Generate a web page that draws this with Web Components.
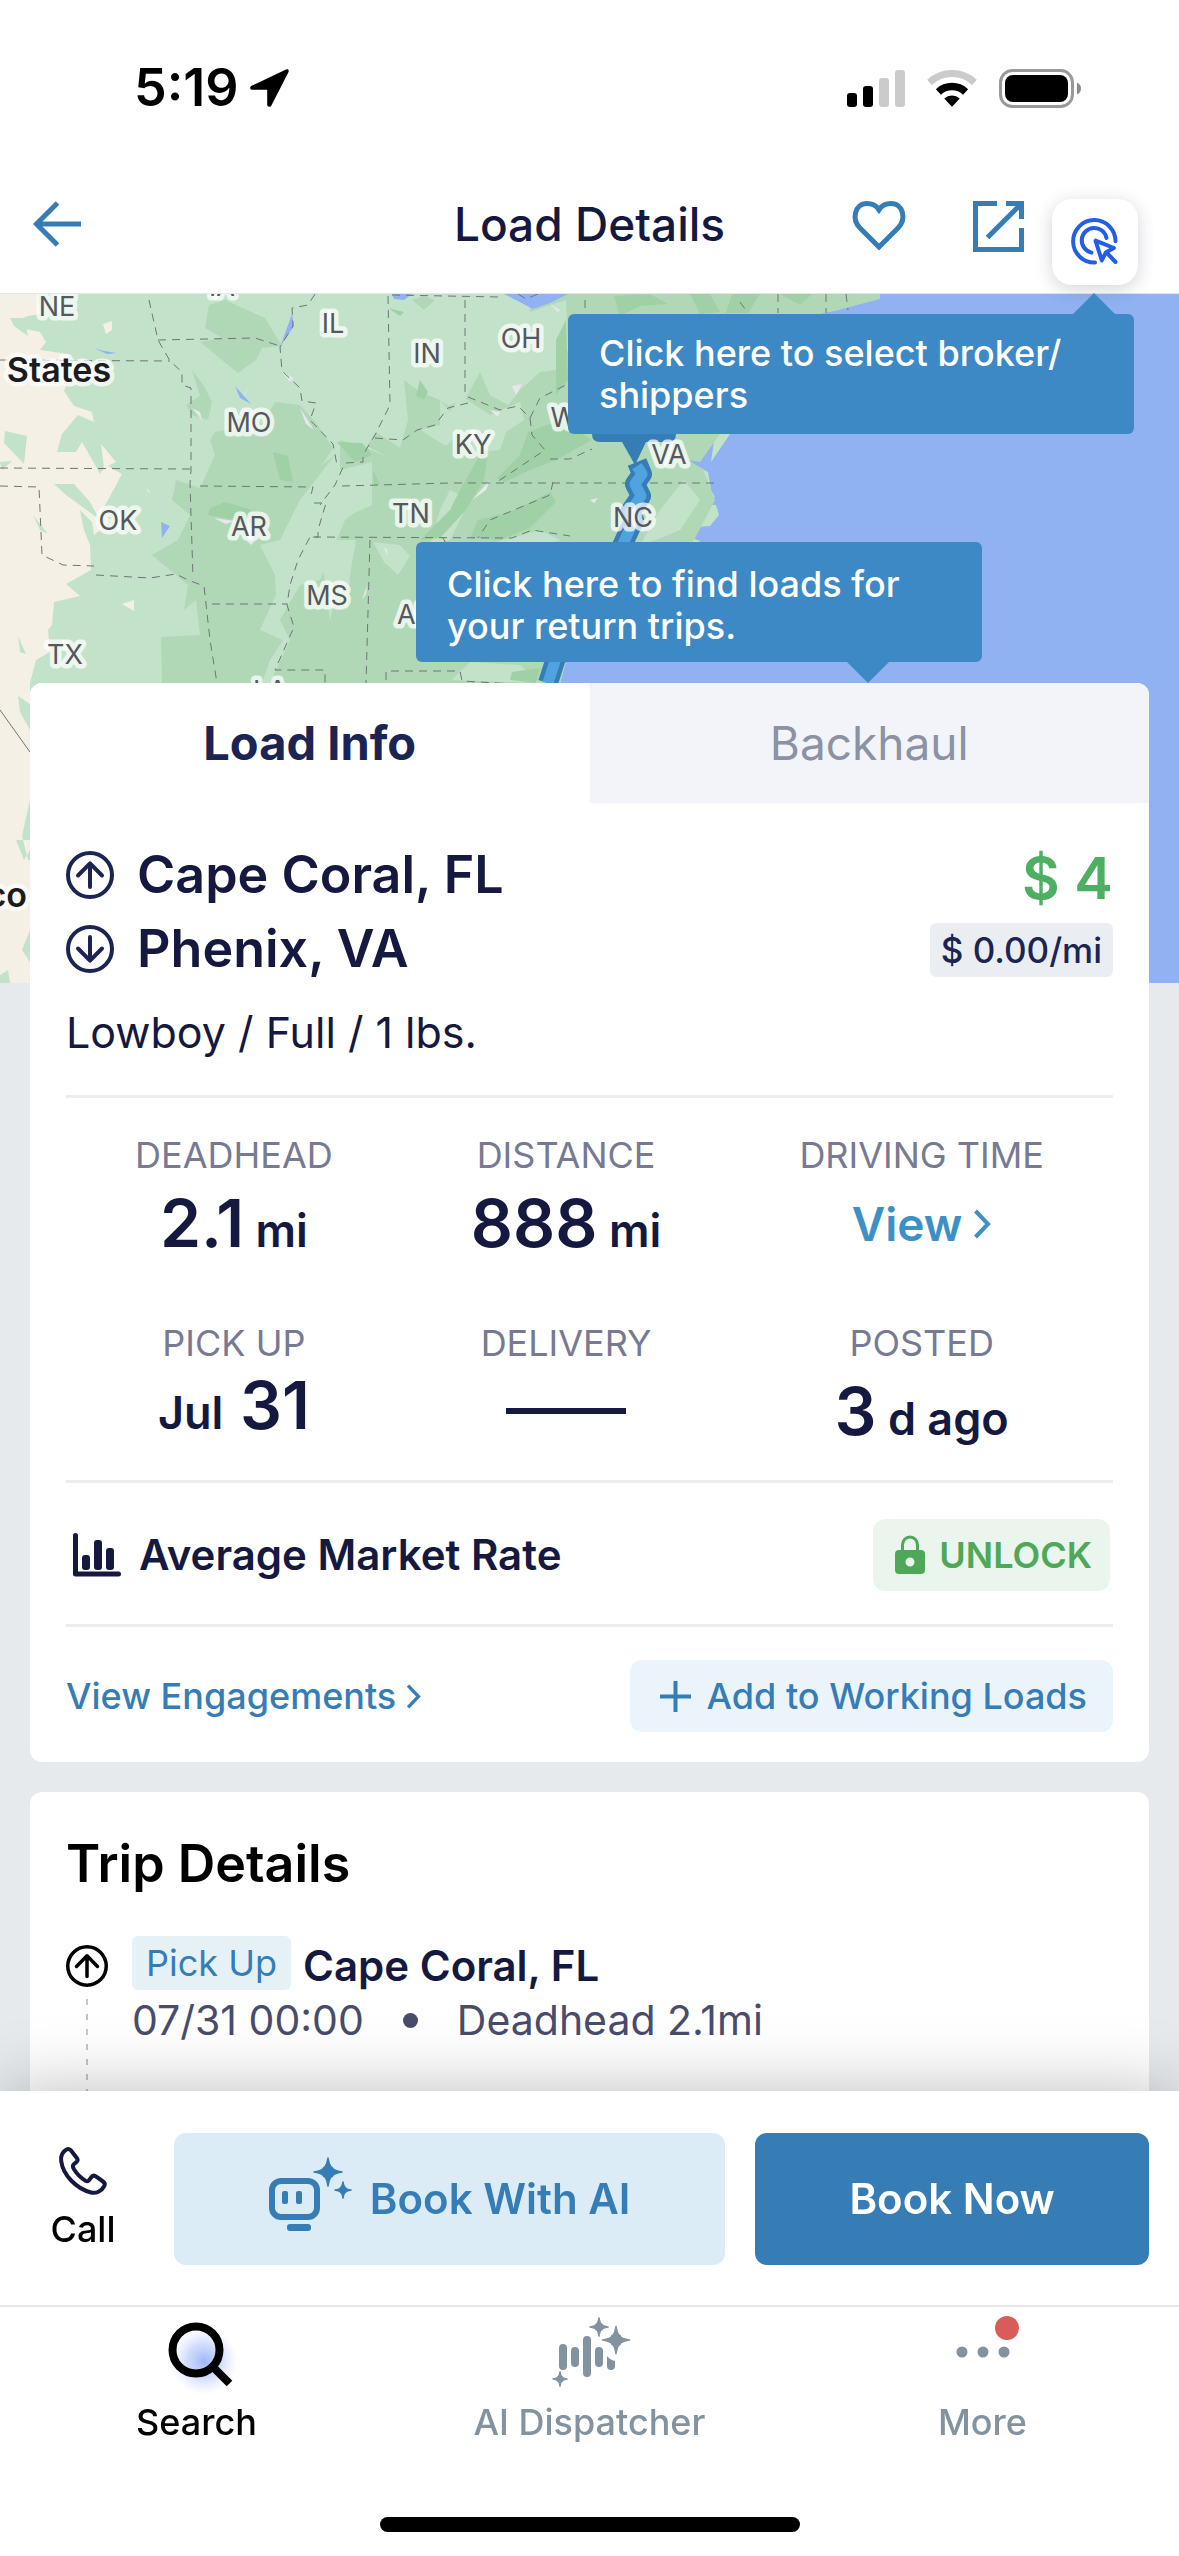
<!DOCTYPE html>
<html lang="en">
<head>
<meta charset="utf-8">
<meta name="viewport" content="width=device-width, initial-scale=1">
<title>Load Details</title>
<style>
  :root {
    --navy: #15193f;
    --indigo: #1b2452;
    --blue: #367db6;
    --tip: #3c89c5;
    --muted: #777a92;
    --slate: #83929f;
    --line: #ebedf2;
    --page: #e6eaed;
    --pad: 36px;
    --gutter: 30px;
  }
  html, body { height: 100%; }
  body {
    margin: 0;
    background: #fff;
    color: var(--navy);
    font-family: Inter, "Liberation Sans", sans-serif;
    font-size: 36px;
    line-height: 44px;
  }
</style>
</head>
<body>
<load-screen></load-screen>

<script>
const base = `
  *, *::before, *::after { box-sizing: border-box; }
  button { font: inherit; color: inherit; background: none; border: 0; padding: 0; margin: 0; cursor: pointer; }
  a { color: inherit; text-decoration: none; }
  h1, h2, p, dl, dt, dd { margin: 0; font: inherit; }
`;

function define(name, css, html, extra) {
  const template = document.createElement('template');
  template.innerHTML = `<style>${base}${css}</style>${html}`;
  customElements.define(name, class extends HTMLElement {
    constructor() {
      super();
      this.attachShadow({ mode: 'open' }).append(template.content.cloneNode(true));
    }
    connectedCallback() { if (extra) extra(this, this.shadowRoot); }
  });
}

/* Four-pointed sparkle centred on (x, y) with arm length r. */
function star(x, y, r) {
  const k = r * 0.24;
  return `<path d="M${x} ${y - r}Q${x + k / 2} ${y - k * 1.4} ${x + k * 1.3} ${y - k * 1.3}Q${x + k * 1.4} ${y - k / 2} ${x + r} ${y}Q${x + k * 1.4} ${y + k / 2} ${x + k * 1.3} ${y + k * 1.3}Q${x + k / 2} ${y + k * 1.4} ${x} ${y + r}Q${x - k / 2} ${y + k * 1.4} ${x - k * 1.3} ${y + k * 1.3}Q${x - k * 1.4} ${y + k / 2} ${x - r} ${y}Q${x - k * 1.4} ${y - k / 2} ${x - k * 1.3} ${y - k * 1.3}Q${x - k / 2} ${y - k * 1.4} ${x} ${y - r}Z" fill="currentColor" stroke="currentColor" stroke-width="1.5" stroke-linejoin="round"/>`;
}

/* name: [width, height, stroke width, body] */
const icons = {
  location: [39, 38, 0, `<path fill="currentColor" d="M36 .6 1.6 16.8C-.6 18-.2 20.8 2.2 20.8H17.2V35.6C17.2 38.2 20.2 38.6 21.4 36.4L38.4 3.2C39.4 1.2 38-.4 36 .6Z"/>`],
  signal: [58, 37, 0, `<rect y="23" width="10" height="14" rx="3" fill="#000"/><rect x="16" y="16" width="10" height="21" rx="3" fill="#000"/><rect x="32" y="8" width="10" height="29" rx="3" fill="#cbcbcb"/><rect x="48" width="10" height="37" rx="3" fill="#cbcbcb"/>`],
  wifi: [50, 37, 7, `<path stroke="#cbcbcb" d="M2.5 12.4A33 33 0 0 1 47.5 12.4"/><path stroke="#000" stroke-width="7.5" d="M11.4 21.9A20 20 0 0 1 38.6 21.9"/><path fill="#000" stroke="none" d="M25 36.8 17.2 28.6A11.5 11.5 0 0 1 32.8 28.6Z"/>`],
  battery: [82, 39, 3, `<rect x="1.5" y="1.5" width="72" height="36" rx="12" stroke="#999"/><rect x="6" y="6" width="63" height="27" rx="8" fill="#000" stroke="none"/><path fill="#8a8a8a" stroke="none" d="M78 13.5Q82 15.5 82 19.5T78 25.5Z"/>`],
  back: [48, 46, 5, `<path d="M48 23H5M24.5 2 3.5 23 24.5 44"/>`],
  heart: [54, 50, 5, `<path d="M27 46 8 27C-.5 18.500 2.500 2.600 15 2.600 20.500 2.600 24.500 5 27 8.800 29.500 5 33.500 2.600 39 2.600 51.500 2.600 54.500 18.500 46 27Z"/>`],
  share: [51, 51, 5, `<path d="M24 2.500H2.500V48.500H48.500V27M33 2.500H48.500V18M47.500 3.500 14.500 36.500"/>`],
  pointer: [48, 48, 4, `<g stroke-linecap="round" stroke-linejoin="round"><path d="M44.500 23.300A21.200 21.200 0 1 0 24 44.500"/><path d="M35.500 20A12.500 12.500 0 1 0 20.500 34.600"/><path d="M24.500 22.600 43 30 35 34.200 30.800 42.400ZM35.500 34.500 44.500 44"/></g>`],
  up: [48, 48, 4, `<circle cx="24" cy="24" r="22"/><path stroke-linecap="round" stroke-linejoin="round" d="M24 36V12.500M12 24.500 24 12.300 36 24.500"/>`],
  down: [48, 48, 4, `<circle cx="24" cy="24" r="22"/><path stroke-linecap="round" stroke-linejoin="round" d="M24 12V35.500M12 23.500 24 35.700 36 23.500"/>`],
  chevron: [18, 30, 4, `<path d="M2.500 2 15 15 2.500 28"/>`],
  chart: [48, 44, 5, `<path stroke-linecap="round" stroke-linejoin="round" d="M2.500 2.500V41H45.500"/><g fill="currentColor" stroke="none"><rect x="9" y="22" width="8" height="15" rx="3"/><rect x="21" y="7" width="8" height="30" rx="3"/><rect x="33" y="15" width="8" height="22" rx="3"/></g>`],
  lock: [30, 40, 3, `<path d="M7.500 17V10A7.500 8 0 0 1 22.500 10V17"/><path fill="currentColor" stroke="none" fill-rule="evenodd" d="M4 15H26A4 4 0 0 1 30 19V35A4 4 0 0 1 26 39H4A4 4 0 0 1 0 35V19A4 4 0 0 1 4 15ZM15 22.500A4.500 4.500 0 0 0 15 31.500 4.500 4.500 0 0 0 15 22.500Z"/>`],
  plus: [31, 31, 4, `<path d="M15.500 0V31M0 15.500H31"/>`],
  phone: [48, 48, 4, `<path stroke-linejoin="round" d="M7.500 2.600C9 1.700 11 2 12 3.500L18 11.200C19 12.500 18.500 14 17.500 15L14.500 17.600C13.300 18.800 14 20.500 15 22.200 18 27 22 31 26.500 33.700 28 34.500 29.200 34.200 30 33.200L32.500 30C33.500 28.700 35 28.300 36.500 29.200L44 34.500C45.600 35.600 46.200 37.300 45.300 39 42.500 44.500 37 46.800 32 45.500 17 41.500 4 28 2.200 14 1.600 9 3 5.200 7.500 2.600Z"/>`],
  robot: [82, 82, 6, `<rect x="3" y="23" width="45" height="36" rx="9"/><g fill="currentColor" stroke="none"><rect x="13" y="33" width="6" height="13" rx="2"/><rect x="27" y="33" width="6" height="13" rx="2"/><rect x="18" y="66" width="24" height="7" rx="3"/></g>${star(59, 14, 14)}${star(74, 32, 8)}`],
  search: [70, 68, 8, `<defs><radialGradient id="g"><stop offset="0" stop-color="#8fabf8" stop-opacity=".85"/><stop offset=".5" stop-color="#a5bafa" stop-opacity=".5"/><stop offset="1" stop-color="#c9d2ff" stop-opacity="0"/></radialGradient></defs><g transform="translate(7 5)"><circle cx="35" cy="38" r="34" fill="url(#g)" stroke="none"/><circle cx="27" cy="27" r="23.500"/><path d="M43.500 43.500 60.500 60.500"/></g>`],
  dispatch: [74, 69, 8, `<path stroke-linecap="round" d="M10 30V48M22 33V45M34 22V55M46 33V45"/><path fill="currentColor" stroke="none" d="M54 38Q57 42 62 43V48A4 4 0 0 1 54 48Z"/>${star(46, 9, 9)}${star(63, 22, 13.5)}${star(7, 61, 7)}`],
  more: [54, 12, 0, `<g fill="currentColor"><circle cx="6" cy="6" r="5.500"/><circle cx="27" cy="6" r="5.500"/><circle cx="48" cy="6" r="5.500"/></g>`]
};

customElements.define('ui-icon', class extends HTMLElement {
  constructor() { super(); this.attachShadow({ mode: 'open' }); }
  connectedCallback() {
    const [w, h, s, body] = icons[this.getAttribute('name')];
    const size = Number(this.getAttribute('size')) || w;
    this.shadowRoot.innerHTML = `
      <style>:host{display:inline-flex;flex:none} svg{display:block;overflow:visible}</style>
      <svg width="${size}" height="${Math.round(size * h / w)}" viewBox="0 0 ${w} ${h}" fill="none" stroke="${s ? 'currentColor' : 'none'}" stroke-width="${s}" aria-hidden="true">${body}</svg>`;
  }
});

/* Coach-mark bubble; the owner places it, and --arrow sets the pointer's distance from the right edge. */
define('tip-bubble', `
  :host { position: absolute; width: 566px; padding: 18px 31px; border-radius: 6px; background: var(--tip); color: #fff;
          font-size: 36px; line-height: 42px; font-weight: 500; text-align: left; white-space: nowrap; }
  :host::before { content: ""; position: absolute; right: var(--arrow); border: 21px solid transparent; }
  :host([side="top"])::before { bottom: 100%; border-top-width: 0; border-bottom-color: var(--tip); }
  :host([side="bottom"]) { padding: 21px 31px 15px; }
  :host([side="bottom"])::before { top: 100%; border-bottom-width: 0; border-top-color: var(--tip); }
`, `<slot></slot>`);

define('status-bar', `
  :host { display: flex; justify-content: space-between; align-items: center; padding: 62px 98px 40px 134px;
          color: #000; font-size: 52px; line-height: 52px; font-weight: 600; }
  .time { display: flex; align-items: center; gap: 11px; }
  .system { display: flex; align-items: center; gap: 22px; }
`, `
  <div class="time"><span>5:19</span><ui-icon name="location"></ui-icon></div>
  <div class="system"><ui-icon name="signal"></ui-icon><ui-icon name="wifi"></ui-icon><ui-icon name="battery"></ui-icon></div>
`);

define('app-header', `
  :host { display: grid; grid-template-columns: 1fr auto 1fr; align-items: center; position: relative; z-index: 3;
          height: 140px; padding: 0 33px; border-bottom: 1px solid #e4e7ea; background: #fff; }
  h1 { font-size: 46px; line-height: 56px; font-weight: 500; }
  button { display: flex; color: var(--blue); }
  .actions { display: flex; justify-content: flex-end; align-items: center; gap: 67px; padding: 5px 122px 0 0; }
  .float { position: absolute; right: 41px; bottom: 8px; width: 86px; height: 86px; align-items: center; justify-content: center;
           border-radius: 20px; background: #fff; color: #245ee4; box-shadow: 0 4px 18px rgba(30, 40, 70, .2); }
  tip-bubble { top: 100%; right: 45px; margin-top: 21px; --arrow: 19px; }
`, `
  <button aria-label="Back"><ui-icon name="back"></ui-icon></button>
  <h1>Load Details</h1>
  <div class="actions">
    <button aria-label="Save load"><ui-icon name="heart"></ui-icon></button>
    <button aria-label="Share"><ui-icon name="share"></ui-icon></button>
  </div>
  <button class="float" aria-label="Select broker or shipper"><ui-icon name="pointer"></ui-icon></button>
  <tip-bubble side="top">Click here to select broker/<br>shippers</tip-bubble>
`);

define('route-map', `
  :host { display: block; height: 689px; background: #91b2f2; overflow: hidden; }
  svg { display: block; height: 100%; width: 1179px; }
  text { font-size: 27px; fill: #55585c; text-anchor: middle; paint-order: stroke; stroke: #fff; stroke-opacity: .72;
         stroke-width: 9px; stroke-linejoin: round; }
  .big { font-weight: 600; font-size: 34px; fill: #1c1c1e; }
`, `
  <svg viewBox="0 294 1179 689" role="img" aria-label="Route map">
    <path fill="#c3e2ca" d="M0 294H880V299H862L838 310 800 318 790 370 760 400 730 434 711 462 715 434H703L700 462 688 460 708 472 711 490 715 497 694 505 716 505 719 515 710 526 698 527 694 537 658 526 700 541 660 600 600 640 566 662 560 683V983H0Z"/>
    <g fill="#b1d8b6">
      <path d="M209 305 225 300 265 318 282 346 262 348 256 360 238 373 222 360 200 342 222 338 205 328Z"/>
      <path d="M192 370 204 386 212 402 208 420 192 415 186 405 200 396Z"/>
      <path d="M215 432 235 428 238 414 262 424 275 402 300 405 318 425 333 448 322 465 335 455 300 500 280 540 260 545 275 575 276 595 260 630 283 640 270 660 262 683H162L161 637 200 635 196 600 184 610 188 585 152 555 178 540 190 515 172 500 176 480 200 488 215 455 210 440Z"/>
      <path d="M340 440 366 447 376 432 400 448 408 420 404 380 420 392 440 400 448 406 466 398 480 372 490 395 508 405 520 390 540 372 556 370 568 350 566 300 530 312 529 294H880V299L838 310 790 320 720 434 700 462 715 500 694 540 566 660 560 683H270L290 640 280 620 300 585 320 580 345 520 372 500 340 480Z"/>
      <path d="M412 300 424 296 435 300 424 310Z"/>
    </g>
    <g fill="#c3e2ca">
      <path d="M334 540 356 540 350 575 348 610 338 590 330 620 322 560Z"/>
      <path d="M373 542 400 545 410 556 398 575 384 562Z"/>
      <path d="M440 400 450 412 460 395 490 415 520 402 524 420 506 432 500 450 480 452 456 436 446 446 420 430 440 425Z"/>
      <path d="M340 470 372 462 372 505 350 515 340 500Z"/>
      <path d="M450 490 470 500 450 540 430 545 440 510Z"/>
      <path d="M660 510 684 480 700 500 680 530 656 540 640 545Z"/>
      <path d="M486 545 540 530 560 540 500 560Z"/>
      <path d="M452 680 470 662 520 665 540 683Z"/>
      <path d="M480 300 528 300 530 340 526 375 500 385 480 360Z"/>
    </g>
    <g fill="#a0d0a6">
      <path d="M273 452 288 456 293 482 280 480 276 465Z"/>
      <path d="M210 508 225 502 252 510 245 522 208 515Z"/>
      <path d="M337 442 362 443 372 455 355 462Z"/>
      <path d="M528 432 560 420 592 440 556 460 530 470 505 482 497 478 520 455Z"/>
      <path d="M478 520 510 512 550 492 556 502 530 528 500 540 470 538Z"/>
      <path d="M460 490 480 455 488 450 484 480 466 510 440 538 420 540 450 510Z"/>
      <path d="M614 296 650 294 668 304 640 306 620 316Z"/>
      <path d="M690 294 710 294 720 312 700 314Z"/>
      <path d="M732 294 760 294 748 313 726 313Z"/>
      <path d="M780 294 812 294 800 305Z"/>
      <path d="M556 340 566 320 568 380 556 395Z"/>
      <path d="M420 380 428 392 424 400 416 396Z"/>
      <path d="M373 470 380 484 374 486Z"/>
      <path d="M388 308 404 312 400 316Z"/>
      <path d="M512 672 540 668 536 683 510 680Z"/>
    </g>
    <g fill="#f5f0e6">
      <path d="M0 294H38L40 314 28 316 18 320 20 328 40 332 46 342 40 350 68 354 72 372 64 391 74 406 92 412 94 422 78 415 62 434 57 452 76 452 82 442 94 463 100 474 104 468 101 444 116 462 108 466 122 474 108 500 96 520 72 502 60 480 84 490 80 500 100 514 112 520 94 535 92 522 80 510 84 530 90 545 91 570 66 584 80 596 54 602 52 625 48 630 50 652 36 660 30 683 30 983H0V360Z"/>
      <path d="M122 604 134 600 134 611Z"/>
      <path d="M103 324 112 321 112 330 106 334Z"/>
    </g>
    <g fill="#c3e2ca">
      <path d="M5 431 27 436 24 464 4 443Z"/><path d="M33 515 48 534 40 530Z"/><path d="M18 636 26 654 20 652Z"/>
      <path d="M54 484 74 484 90 502 100 520 84 508 66 495Z"/>
      <path d="M0 462 12 461 2 470Z"/><path d="M10 318 24 318 28 336 14 326Z"/>
      <path d="M16 840H30V850L24 860ZM18 696 30 704 30 730 20 712ZM30 800 22 836 28 860 30 860ZM30 930 22 950 30 962ZM0 975 8 970 10 983 0 983Z"/>
    </g>
    <g fill="#e6e8ee">
      <path d="M192 408 200 412 202 420Z"/><path d="M512 386 522 384 516 395Z"/><path d="M214 518 234 521 226 524Z"/>
      <path d="M246 540 256 540 251 545Z"/><path d="M240 400 250 386 244 396Z"/><path d="M282 372 294 378 290 382Z"/>
      <path d="M146 490 151 494 148 489Z"/><path d="M472 500 490 480 486 490Z"/><path d="M590 500 598 498 594 503Z"/>
      <path d="M300 408 314 430 306 424Z"/><path d="M362 600 367 585 366 594Z"/><path d="M384 548 388 556 387 549Z"/>
      <path d="M366 446 386 456 368 448Z"/><path d="M490 410 500 412 498 417Z"/><path d="M550 304 560 310 558 312Z"/>
    </g>
    <g fill="#91b2f2">
      <path d="M504 294H568L550 303 533 309Z"/><path d="M392 294H412L404 300 394 299Z"/>
      <path d="M292 314 294 326 280 347Z"/><path d="M235 386 251 404 240 398Z"/><path d="M94 348 107 354 117 353 104 351Z"/>
      <path d="M161 522 170 526 162 538Z"/>
      <path d="M688 460 708 472 700 462Z"/>
    </g>
    <g fill="none" stroke="#6c7675" stroke-width="1" stroke-dasharray="8 6">
      <path d="M149 300 158 340 170 361 182 372V385L191 388V470L190 484 193 578"/>
      <path d="M158 340 255 338 280 346"/><path d="M0 360 170 361"/><path d="M0 468 190 469"/>
      <path d="M0 486 39 487 42 555 63 565 94 566"/><path d="M96 575 150 578 176 574 188 580 204 586 210 640 217 683"/>
      <path d="M200 486 313 487 310 499"/><path d="M314 503H326L318 530V537H310L298 560 290 585 287 605 294 627 275 670H325V683"/>
      <path d="M212 604H287"/><path d="M315 294 308 305 292 308 293 326 280 347 282 371 300 388 302 401 316 403 310 420 333 444 337 465"/>
      <path d="M388 296 390 405 375 435 363 455V462L345 463 335 485 320 505"/><path d="M465 300V396"/>
      <path d="M375 438 403 440 417 430 435 425 448 408 468 403V397L500 410 518 406 530 418 540 398 568 384"/>
      <path d="M392 295 500 297M518 294 526 299 538 294"/><path d="M342 486 450 483H717"/>
      <path d="M530 418 532 435 545 450 497 482"/><path d="M550 459H570L592 449"/><path d="M553 482 550 495 490 520 478 538"/>
      <path d="M313 537 512 538 532 530 570 536"/><path d="M370 540 366 683M443 538 447 545"/>
      <path d="M386 680V671H460L462 681 515 684"/><path d="M585 300V312M740 302 748 313M778 294V313M826 294V313M846 294 848 310"/>
      <path d="M0 710 30 752" stroke-dasharray="none"/>
    </g>
    <g fill="none" stroke-linejoin="round">
      <path stroke="#367db6" stroke-width="20" d="M637 462 642 474 635 484 641 496 630 512 634 520 622 546 590 620 556 658 548 683"/>
      <path stroke="#4fa3df" stroke-width="11" d="M637 466 642 474 635 484 641 496 630 512 634 520 622 546 590 620 556 658 548 683"/>
    </g>
    <path fill="#367db6" d="M592 380H676V434Q676 442 668 442H646L635 465 622 442H600Q592 442 592 434Z"/>
    <text x="57" y="316">NE</text><text x="222" y="296">IA</text><text x="333" y="333">IL</text>
    <text x="427" y="363">IN</text><text x="521" y="348">OH</text><text x="249" y="432">MO</text>
    <text x="473" y="454">KY</text><text x="573" y="427">WV</text><text x="118" y="530">OK</text>
    <text x="249" y="536">AR</text><text x="411" y="523">TN</text><text x="327" y="605">MS</text>
    <text x="414" y="624">AL</text><text x="65" y="664">TX</text><text x="270" y="700">LA</text>
    <text x="669" y="464">VA</text><text x="633" y="527">NC</text>
    <text class="big" x="59" y="382">States</text>
    <text class="big" x="27" y="907" style="text-anchor:end">Mexico</text>
  </svg>
`);

define('stat-item', `
  :host { display: flex; flex-direction: column; align-items: center; gap: 6px; }
  dt { color: var(--muted); font-size: 36px; line-height: 44px; }
  dd { height: 80px; line-height: 80px; font-size: 66px; font-weight: 600; color: var(--navy); white-space: nowrap; }
  :host([kind="date"]) dd { line-height: 68px; }
  ::slotted(small) { font-size: 45px; }
  ::slotted(a) { display: flex; align-items: center; gap: 11px; height: 82px; font-size: 46px; }
  ::slotted(.empty) { display: block; width: 120px; height: 6px; margin-top: 37px; background: var(--navy); }
`, `<dt></dt><dd><slot></slot></dd>`, (host, root) => { root.querySelector('dt').textContent = host.getAttribute('label'); });

define('load-card', `
  :host { display: block; border-radius: 12px; background: #fff; }
  .tabs { display: flex; }
  .tabs button { flex: 1; height: 120px; position: relative; font-size: 46px; color: #8b92a3; background: #f3f4f9; border-radius: 0 12px 0 0; }
  .tabs button[aria-selected="true"] { background: #fff; color: var(--indigo); font-size: 47px; font-weight: 700; border-radius: 12px 0 0 0; }
  tip-bubble { bottom: 100%; right: 167px; margin-bottom: 21px; --arrow: 93px; }
  .body { padding: 35px var(--pad) 30px; }
  .trip { display: flex; justify-content: space-between; }
  .stop { display: flex; align-items: center; gap: 23px; font-size: 52px; line-height: 74px; font-weight: 600; }
  ui-icon { color: var(--indigo); }
  .price { display: flex; flex-direction: column; align-items: flex-end; gap: 5px; }
  .price strong { font-size: 58px; line-height: 80px; font-weight: 600; color: #4caf62; }
  .price span { padding: 0 11px; border-radius: 6px; background: #eaeef2; color: var(--indigo); font-size: 35px; line-height: 54px; font-weight: 500; }
  .kind { margin-top: 19px; font-size: 43px; line-height: 54px; }
  hr { margin: 0; border: 0; height: 3px; background: var(--line); }
  .kind + hr { margin-top: 36px; }
  dl { display: flex; justify-content: space-around; padding: 35px 0 29px; }
  stat-item a, stat-item a ui-icon { color: #3d90c4; }
  .col { display: flex; flex-direction: column; gap: 58px; }
  .row { display: flex; justify-content: space-between; align-items: center; }
  .rate { padding: 36px 3px 33px 7px; font-size: 42px; font-weight: 600; }
  .rate > span { display: flex; align-items: center; gap: 18px; }
  .rate ui-icon { color: inherit; }
  .more { padding-top: 33px; color: var(--blue); font-weight: 500; }
  .more ui-icon { color: inherit; }
  .more a { display: flex; align-items: center; gap: 10px; }
  .pill { display: flex; align-items: center; gap: 14px; height: 72px; border-radius: 12px; font-size: 36px; font-weight: 500; }
  .unlock { padding: 0 18px 0 22px; background: #e9f5ed; color: #4fa858; font-weight: 600; }
  .add { padding: 0 26px 0 30px; gap: 16px; background: #ebf4fa; }
`, `
  <div class="tabs" role="tablist">
    <button role="tab" aria-selected="true">Load Info</button>
    <button role="tab" aria-selected="false">Backhaul<tip-bubble side="bottom">Click here to find loads for<br>your return trips.</tip-bubble></button>
  </div>
  <div class="body">
    <div class="trip">
      <div>
        <div class="stop"><ui-icon name="up"></ui-icon><span>Cape Coral, FL</span></div>
        <div class="stop"><ui-icon name="down"></ui-icon><span>Phenix, VA</span></div>
      </div>
      <div class="price"><strong>$ 4</strong><span>$ 0.00/mi</span></div>
    </div>
    <p class="kind">Lowboy / Full / 1 lbs.</p>
    <hr>
    <dl>
      <div class="col"><stat-item label="DEADHEAD">2.1<small> mi</small></stat-item><stat-item label="PICK UP" kind="date"><small>Jul</small> 31</stat-item></div>
      <div class="col"><stat-item label="DISTANCE">888<small> mi</small></stat-item><stat-item label="DELIVERY"><span class="empty"></span></stat-item></div>
      <div class="col"><stat-item label="DRIVING TIME"><a href="#time">View<ui-icon name="chevron"></ui-icon></a></stat-item><stat-item label="POSTED">3<small> d ago</small></stat-item></div>
    </dl>
    <hr>
    <div class="row rate">
      <span><ui-icon name="chart"></ui-icon>Average Market Rate</span>
      <button class="pill unlock"><ui-icon name="lock"></ui-icon>UNLOCK</button>
    </div>
    <hr>
    <div class="row more">
      <a href="#engagements">View Engagements<ui-icon name="chevron" size="15"></ui-icon></a>
      <button class="pill add"><ui-icon name="plus"></ui-icon>Add to Working Loads</button>
    </div>
  </div>
`);

define('trip-card', `
  :host { display: block; padding: 40px var(--pad); border-radius: 12px; background: #fff; }
  h2 { color: #000; font-size: 52px; line-height: 64px; font-weight: 600; margin-bottom: 40px; }
  .stop { display: flex; gap: 24px; }
  .rail { display: flex; flex-direction: column; align-items: center; gap: 12px; padding-top: 9px; width: 42px; color: #000; }
  .rail i { flex: 1; width: 2px; min-height: 240px; background: repeating-linear-gradient(#c3c5cf 0 6px, transparent 6px 15px); }
  .place { display: flex; gap: 12px; font-size: 42px; line-height: 60px; font-weight: 600; }
  .place b { align-self: flex-start; padding: 0 14px; border-radius: 6px; background: #e6f1f6; color: var(--blue); font-size: 36px; line-height: 54px; font-weight: 400; }
  .when { display: flex; align-items: center; gap: 39px; color: #494c6a; font-size: 41px; line-height: 48px; }
  .dot { width: 15px; height: 15px; border-radius: 50%; background: currentColor; }
`, `
  <h2>Trip Details</h2>
  <div class="stop">
    <div class="rail"><ui-icon name="up" size="42"></ui-icon><i></i></div>
    <div>
      <div class="place"><b>Pick Up</b><span>Cape Coral, FL</span></div>
      <div class="when"><span>07/31 00:00</span><span class="dot"></span><span>Deadhead 2.1mi</span></div>
    </div>
  </div>
`);

define('action-bar', `
  :host { display: flex; align-items: center; padding: 42px var(--gutter) 40px; gap: 30px; }
  .call { display: flex; flex-direction: column; align-items: center; gap: 12px; width: 106px; margin-right: 8px; color: #000; font-weight: 500; }
  .call ui-icon { color: var(--navy); }
  .book { display: flex; align-items: center; justify-content: center; gap: 19px; height: 132px; border-radius: 12px; font-size: 42px; font-weight: 600; }
  .ai { flex: 7; background: #dcecf7; color: var(--blue); }
  .now { flex: 5; background: var(--blue); color: #fff; }
`, `
  <button class="call"><ui-icon name="phone"></ui-icon>Call</button>
  <button class="book ai"><ui-icon name="robot"></ui-icon>Book With AI</button>
  <button class="book now">Book Now</button>
`);

define('tab-bar', `
  :host { display: block; border-top: 2px solid #e5e7e9; padding: 9px 0 24px; }
  nav { display: flex; }
  a { flex: 1; display: flex; flex-direction: column; align-items: center; gap: 12px; color: var(--slate); font-weight: 500; }
  a[aria-current] { color: #000; }
  .glyph { position: relative; display: flex; align-items: center; height: 72px; }
  .badge { position: absolute; right: -9px; top: 0; width: 24px; height: 24px; border-radius: 50%; background: #d95c5a; }
  .home { width: 420px; height: 15px; margin: 73px auto 0; border-radius: 8px; background: #000; }
`, `
  <nav>
    <a href="#search" aria-current="page"><span class="glyph"><ui-icon name="search"></ui-icon></span>Search</a>
    <a href="#dispatcher"><span class="glyph"><ui-icon name="dispatch"></ui-icon></span>AI Dispatcher</a>
    <a href="#more"><span class="glyph"><ui-icon name="more"></ui-icon><span class="badge"></span></span>More</a>
  </nav>
  <div class="home"></div>
`);

define('load-screen', `
  :host { display: flex; flex-direction: column; height: 100vh; }
  main { flex: 1; min-height: 0; overflow-y: auto; scrollbar-width: none; background: var(--page); }
  .cards { display: flex; flex-direction: column; gap: 30px; position: relative; margin-top: -300px; padding: 0 var(--gutter) 30px; }
  footer { position: relative; z-index: 2; background: #fff; box-shadow: 0 0 66px rgba(0, 0, 0, .26); }
`, `
  <status-bar></status-bar>
  <app-header></app-header>
  <main>
    <route-map></route-map>
    <div class="cards"><load-card></load-card><trip-card></trip-card></div>
  </main>
  <footer><action-bar></action-bar><tab-bar></tab-bar></footer>
`);
</script>
</body>
</html>
